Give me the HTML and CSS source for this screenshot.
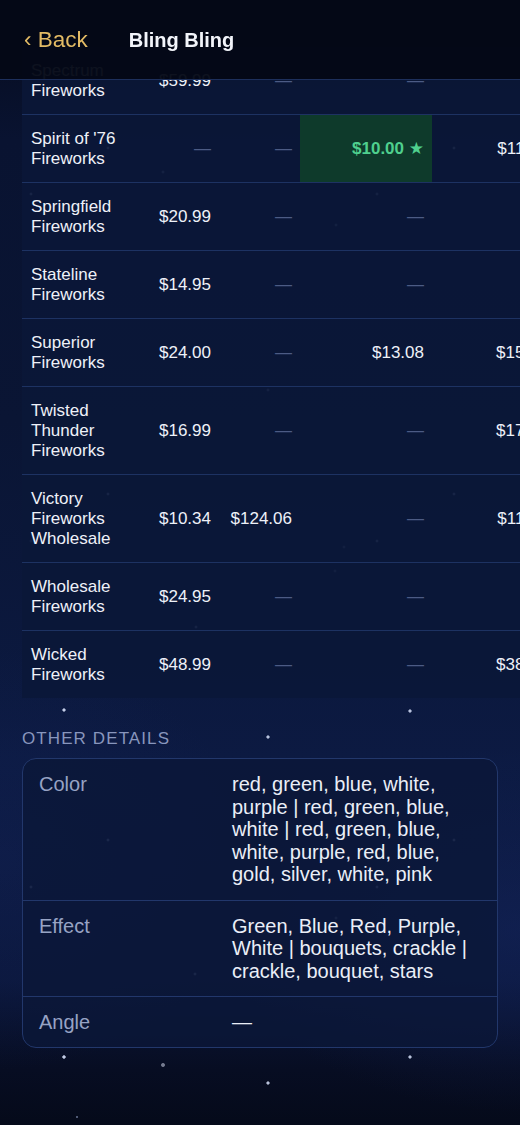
FILE: index.html
```html
<!DOCTYPE html>
<html lang="en">
<head>
<meta charset="utf-8">
<title>Bling Bling</title>
<link rel="stylesheet" href="styles.css">
</head>
<body>
<header class="topbar">
  <a class="back">‹ Back</a>
  <h1 class="title">Bling Bling</h1>
</header>
<main class="content">
  <div class="table-wrap">
    <table class="prices">
      <colgroup>
        <col class="c-name"><col class="c-p1"><col class="c-p2"><col class="c-p3"><col class="c-p4">
      </colgroup>
      <tbody>
        <tr><td class="name">Spectrum Fireworks</td><td>$59.99</td><td class="dash">—</td><td class="dash">—</td><td class="dash">—</td></tr>
        <tr><td class="name">Spirit of '76 Fireworks</td><td class="dash">—</td><td class="dash">—</td><td class="best">$10.00 ★</td><td>$11.99</td></tr>
        <tr><td class="name">Springfield Fireworks</td><td>$20.99</td><td class="dash">—</td><td class="dash">—</td><td class="dash">—</td></tr>
        <tr><td class="name">Stateline Fireworks</td><td>$14.95</td><td class="dash">—</td><td class="dash">—</td><td class="dash">—</td></tr>
        <tr><td class="name">Superior Fireworks</td><td>$24.00</td><td class="dash">—</td><td>$13.08</td><td>$15.99</td></tr>
        <tr><td class="name">Twisted Thunder Fireworks</td><td>$16.99</td><td class="dash">—</td><td class="dash">—</td><td>$17.99</td></tr>
        <tr><td class="name">Victory Fireworks Wholesale</td><td>$10.34</td><td>$124.06</td><td class="dash">—</td><td>$11.49</td></tr>
        <tr><td class="name">Wholesale Fireworks</td><td>$24.95</td><td class="dash">—</td><td class="dash">—</td><td class="dash">—</td></tr>
        <tr><td class="name">Wicked Fireworks</td><td>$48.99</td><td class="dash">—</td><td class="dash">—</td><td>$38.99</td></tr>
      </tbody>
    </table>
  </div>

  <h2 class="section-label">Other Details</h2>
  <div class="details">
    <div class="drow">
      <div class="dlabel">Color</div>
      <div class="dvalue">red, green, blue, white, purple | red, green, blue, white | red, green, blue, white, purple, red, blue, gold, silver, white, pink</div>
    </div>
    <div class="drow">
      <div class="dlabel">Effect</div>
      <div class="dvalue">Green, Blue, Red, Purple, White | bouquets, crackle | crackle, bouquet, stars</div>
    </div>
    <div class="drow">
      <div class="dlabel">Angle</div>
      <div class="dvalue">—</div>
    </div>
  </div>
</main>
</body>
</html>
```
FILE: styles.css
```css
html, body {
  margin: 0;
  padding: 0;
}

html {
  background-color: #081029;
}

body {
  min-height: 1125px;
  font-family: "Liberation Sans", Arial, "DejaVu Sans", sans-serif;
  color: #e8ecf6;
  background-color: #081029;
  background-image:
    radial-gradient(circle at 108px 148px, rgba(170,185,225,0.55) 0 1px, transparent 1.8px),
    radial-gradient(circle at 163px 172px, rgba(170,185,225,0.45) 0 1px, transparent 1.8px),
    radial-gradient(circle at 31px 194px, rgba(170,185,225,0.55) 0 1px, transparent 1.8px),
    radial-gradient(circle at 454px 148px, rgba(170,185,225,0.55) 0 1px, transparent 1.8px),
    radial-gradient(circle at 377px 194px, rgba(170,185,225,0.45) 0 1px, transparent 1.8px),
    radial-gradient(circle at 336px 225px, rgba(170,185,225,0.4) 0 1px, transparent 1.8px),
    radial-gradient(circle at 268px 390px, rgba(170,185,225,0.45) 0 1px, transparent 1.8px),
    radial-gradient(circle at 108px 494px, rgba(170,185,225,0.55) 0 1px, transparent 1.8px),
    radial-gradient(circle at 454px 494px, rgba(170,185,225,0.55) 0 1px, transparent 1.8px),
    radial-gradient(circle at 31px 541px, rgba(170,185,225,0.45) 0 1px, transparent 1.8px),
    radial-gradient(circle at 377px 541px, rgba(170,185,225,0.5) 0 1px, transparent 1.8px),
    radial-gradient(circle at 344px 547px, rgba(170,185,225,0.35) 0 1px, transparent 1.8px),
    radial-gradient(circle at 335px 571px, rgba(170,185,225,0.35) 0 1px, transparent 1.8px),
    radial-gradient(circle at 196px 627px, rgba(170,185,225,0.5) 0 1px, transparent 1.8px),
    radial-gradient(circle at 64px 710px, rgba(215,225,250,0.9) 0 1.2px, transparent 2px),
    radial-gradient(circle at 410px 711px, rgba(215,225,250,0.85) 0 1.2px, transparent 2px),
    radial-gradient(circle at 268px 737px, rgba(215,225,250,0.85) 0 1.2px, transparent 2px),
    radial-gradient(circle at 108px 840px, rgba(170,185,225,0.55) 0 1px, transparent 1.8px),
    radial-gradient(circle at 454px 840px, rgba(170,185,225,0.55) 0 1px, transparent 1.8px),
    radial-gradient(circle at 31px 887px, rgba(170,185,225,0.5) 0 1px, transparent 1.8px),
    radial-gradient(circle at 377px 887px, rgba(170,185,225,0.5) 0 1px, transparent 1.8px),
    radial-gradient(circle at 336px 918px, rgba(170,185,225,0.35) 0 1px, transparent 1.8px),
    radial-gradient(circle at 195px 974px, rgba(170,185,225,0.5) 0 1px, transparent 1.8px),
    radial-gradient(circle at 64px 1057px, rgba(215,225,250,0.9) 0 1.3px, transparent 2.1px),
    radial-gradient(circle at 163px 1065px, rgba(190,195,215,0.6) 0 1.5px, transparent 2.3px),
    radial-gradient(circle at 268px 1083px, rgba(215,225,250,0.85) 0 1.2px, transparent 2px),
    radial-gradient(circle at 410px 1057px, rgba(215,225,250,0.85) 0 1.2px, transparent 2px),
    radial-gradient(circle at 77px 1117px, rgba(170,185,225,0.45) 0 0.8px, transparent 1.5px),
    radial-gradient(ellipse 420px 260px at 520px 930px, rgba(22,40,100,0.45), transparent 70%),
    radial-gradient(ellipse 360px 300px at 0px 860px, rgba(20,36,90,0.35), transparent 70%),
    linear-gradient(180deg, #060b1d 0px, #091331 140px, #0a1534 420px, #0c1a42 760px, #0b173c 980px, #070d22 1070px, #050a1a 1125px);
  background-repeat: no-repeat;
}

/* Header bar (overlays the scrolled content) */
.topbar {
  position: fixed;
  top: 0;
  left: 0;
  right: 0;
  height: 80px;
  box-sizing: border-box;
  display: flex;
  align-items: center;
  gap: 41px;
  padding: 0 0 0 24px;
  background: rgba(4, 8, 22, 0.96);
  border-bottom: 1px solid #1d2f5c;
  z-index: 10;
}

.back {
  font-size: 22.5px;
  color: #e3bb65;
  text-decoration: none;
  line-height: 26px;
}

.title {
  margin: 0;
  font-size: 20px;
  font-weight: 700;
  color: #f2f4fa;
  line-height: 24px;
}

/* Content */
.content {
  padding-top: 47px;
  padding-bottom: 40px;
}

.table-wrap {
  margin-left: 22px;
  overflow: hidden;
}

.prices {
  border-collapse: collapse;
  table-layout: fixed;
  width: 534px;
  background: rgba(11, 23, 56, 0.86);
  font-size: 17px;
  line-height: 20px;
}

.c-name { width: 128px; }
.c-p1 { width: 69px; }
.c-p2 { width: 81px; }
.c-p3 { width: 132px; }
.c-p4 { width: 124px; }

.prices td {
  padding: 14px 8px 13px;
  text-align: right;
  vertical-align: middle;
  color: #eef1f8;
  border-bottom: 1px solid #1d3262;
  white-space: nowrap;
}

.prices tr:last-child td {
  border-bottom: none;
}

.prices td.name {
  text-align: left;
  padding-left: 9px;
  white-space: normal;
}

.prices td.dash {
  color: #4c5b84;
}

.prices td.best {
  background: #0e3a2b;
  color: #4fcf8e;
  font-weight: 700;
}

/* Other details */
.section-label {
  margin: 31px 22px 9px;
  font-size: 17px;
  line-height: 20px;
  font-weight: 400;
  text-transform: uppercase;
  letter-spacing: 1.1px;
  color: #8896bd;
}

.details {
  margin: 0 22px;
  border: 1px solid #22376b;
  border-radius: 14px;
  background: rgba(11, 23, 56, 0.82);
  overflow: hidden;
}

.drow {
  display: grid;
  grid-template-columns: 177px 1fr;
  gap: 16px;
  padding: 14px 16px;
  border-bottom: 1px solid #22376b;
  font-size: 20px;
  line-height: 22.5px;
}

.drow:last-child {
  border-bottom: none;
  padding-bottom: 13px;
}

.dlabel {
  color: #97a3c4;
}

.dvalue {
  color: #eaeef7;
}
```
